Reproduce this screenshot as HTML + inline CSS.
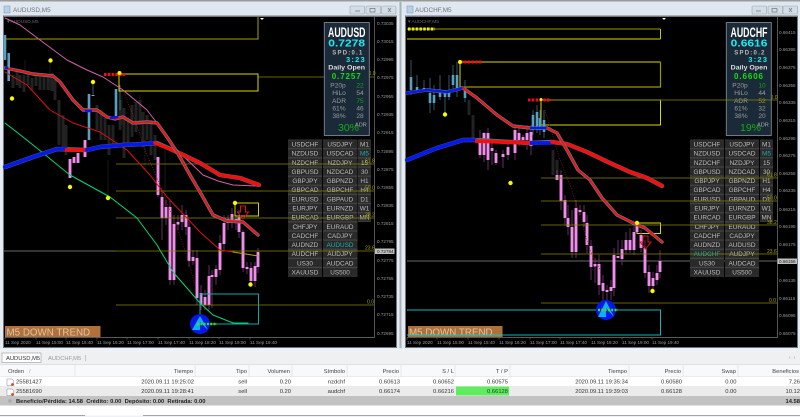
<!DOCTYPE html>
<html><head><meta charset="utf-8"><style>
html,body{margin:0;padding:0;background:#e4ecf2;width:800px;height:417px;overflow:hidden}
svg{display:block;filter:blur(.35px)}
text{font-family:"Liberation Sans",sans-serif}
.ax{font-size:4.6px;fill:#9a9a9a}
.bt{font-size:6.4px;fill:#bdbdbd;text-anchor:middle}
.fl{font-size:5px;fill:#a8a800}
.th{font-size:5.8px;fill:#444;text-anchor:end}
.td{font-size:5.8px;fill:#333;text-anchor:end}
.pl{font-size:6.6px;fill:#9a9a9a;text-anchor:middle}
.c{fill:none;stroke-linejoin:round;stroke-linecap:round}
</style></head><body>
<svg width="800" height="417" viewBox="0 0 800 417" xmlns="http://www.w3.org/2000/svg">
<defs>
<pattern id="b" width="800" height="9.14" y="139.6" patternUnits="userSpaceOnUse"><rect width="800" height="9.14" fill="#444"/><rect y=".6" width="800" height="7.9" fill="#2a2a2a"/></pattern>
</defs>
<rect width="800" height="417" fill="#e4ecf2"/>
<rect width="800" height="1.5" fill="#9a9a9a"/>
<rect x="0" y="2" width="800" height="14" fill="#dfe8f0"/>
<rect x="399.500" y="2" width="2" height="346" fill="#a9b0b6"/>
<rect x="3" y="15.500" width="394" height="332.500" fill="#70767c"/>
<rect x="405" y="15.500" width="393" height="332.500" fill="#70767c"/>
<rect x="4" y="17" width="392" height="330" fill="#000"/>
<rect x="406" y="17" width="391" height="330" fill="#000"/>
<!-- titles -->
<rect x="4" y="6" width="6" height="7" fill="#b8d0e4" stroke="#7fa0c0" stroke-width=".6"/>
<text x="13" y="12" font-size="6.400" fill="#6f7378">AUDUSD,M5</text>
<rect x="407" y="6" width="6" height="7" fill="#b8d0e4" stroke="#7fa0c0" stroke-width=".6"/>
<text x="415" y="12" font-size="6.400" fill="#6f7378">AUDCHF,M5</text>
<g fill="#d3dde6" stroke="#9aa6b0" stroke-width=".6">
<rect x="350" y="6" width="14.500" height="8" rx="1"/><rect x="366" y="6" width="14.500" height="8" rx="1"/><rect x="381.500" y="6" width="14.500" height="8" rx="1"/>
<rect x="752" y="6" width="14.500" height="8" rx="1"/><rect x="768" y="6" width="14.500" height="8" rx="1"/><rect x="783" y="6" width="14.500" height="8" rx="1"/>
</g>
<path d="M355 11h5M756 11h5" stroke="#777" stroke-width=".8"/>
<path d="M370 8.500h5v3.500h-5zM772 8.500h5v3.500h-5zM388 8l3 4M391 8l-3 4M789 8l3 4M792 8l-3 4" stroke="#777" stroke-width=".7" fill="none"/>
<text x="7" y="23" font-size="4.800" fill="#666">▾ AUDUSD,M5</text>
<text x="408" y="23" font-size="4.800" fill="#666">▾ AUDCHF,M5</text>
<path d="M260 18h4l-2 2zM662 18h4l-2 2z" fill="#fff"/>
<!-- axes -->
<path d="M374.500 17V337.500H5M777.500 17V337.500H407" fill="none" stroke="#777" stroke-width=".7"/>
<path d="M5 337.500v2M36 337.500v2M66 337.500v2M97 337.500v2M127 337.500v2M158 337.500v2M189 337.500v2M219 337.500v2M250 337.500v2M407 337.500v2M437 337.500v2M468 337.500v2M499 337.500v2M530 337.500v2M560 337.500v2M591 337.500v2M622 337.500v2M652 337.500v2" stroke="#777" stroke-width=".6"/>
<g class="ax">
<text x="377" y="25">0.73035</text><text x="377" y="43">0.73015</text><text x="377" y="61">0.72995</text><text x="377" y="79">0.72975</text><text x="377" y="98">0.72955</text><text x="377" y="116">0.72935</text><text x="377" y="134">0.72915</text><text x="377" y="153">0.72895</text><text x="377" y="171">0.72875</text><text x="377" y="189">0.72855</text><text x="377" y="207">0.72835</text><text x="377" y="225">0.72815</text><text x="377" y="243">0.72795</text><text x="377" y="262">0.72775</text><text x="377" y="280">0.72755</text><text x="377" y="298">0.72735</text><text x="377" y="316">0.72715</text><text x="377" y="335">0.72695</text>
<text x="779" y="34">0.66415</text><text x="779" y="51">0.66395</text><text x="779" y="69">0.66375</text><text x="779" y="87">0.66355</text><text x="779" y="104">0.66335</text><text x="779" y="122">0.66315</text><text x="779" y="140">0.66295</text><text x="779" y="157">0.66275</text><text x="779" y="175">0.66255</text><text x="779" y="192">0.66235</text><text x="779" y="211">0.66215</text><text x="779" y="228">0.66195</text><text x="779" y="246">0.66175</text><text x="779" y="282">0.66135</text><text x="779" y="300">0.66115</text><text x="779" y="317">0.66095</text><text x="779" y="335">0.66075</text>
<text x="5" y="344">11 Sep 2020</text><text x="36" y="344">11 Sep 15:00</text><text x="66" y="344">11 Sep 15:40</text><text x="97" y="344">11 Sep 16:20</text><text x="127" y="344">11 Sep 17:00</text><text x="158" y="344">11 Sep 17:40</text><text x="189" y="344">11 Sep 18:20</text><text x="219" y="344">11 Sep 19:00</text><text x="250" y="344">11 Sep 19:40</text>
<text x="407" y="344">11 Sep 2020</text><text x="437" y="344">11 Sep 15:00</text><text x="468" y="344">11 Sep 15:40</text><text x="499" y="344">11 Sep 16:20</text><text x="530" y="344">11 Sep 17:00</text><text x="560" y="344">11 Sep 17:40</text><text x="591" y="344">11 Sep 18:20</text><text x="622" y="344">11 Sep 19:00</text><text x="652" y="344">11 Sep 19:40</text>
</g>
<rect x="375" y="248.500" width="19.500" height="5.500" fill="#c0c0c0"/><text x="377" y="253" font-size="4.600" fill="#222">0.72784</text>
<rect x="777.500" y="258.500" width="19.500" height="5.500" fill="#c0c0c0"/><text x="779" y="263" font-size="4.600" fill="#222">0.66156</text>
<!-- base lines -->
<path d="M4 251H116" stroke="#8a8a8a" stroke-width=".8"/><path d="M407 261H777" stroke="#8a8a8a" stroke-width=".8"/>
<!-- boxes left -->
<path d="M5 39H258V17" fill="none" stroke="#a8a400" stroke-width="1"/>
<path d="M258 77H374" stroke="#8a8600" stroke-width=".8"/>
<!-- dark candles left -->
<path d="M13 75v13M17 72v13M20 75v13M24 75v17M28 72v13M32 78v12M36 74v12M40 74v16M44 76v14M48 74v16M52 73v18M55 80v20M59 100v45M63 115v35M66 125v30M97 105v25M101 110v30M105 118v22M109 125v30M113 125v20M120 100v30M124 108v50M128 120v25M132 105v32M136 102v30M140 100v25M143 112v35M147 115v25M151 120v35M155 135v25" stroke="#222" stroke-width="3"/>
<path d="M25 60v25M50 60v30M93 84v12M119 80v20M122 95v30M140 95v40M165 145v60M108 160v40M145 140v30" stroke="#1e1e1e" stroke-width=".8"/>
<!-- blue candles left -->
<path d="M5 35v25M8.700 53v28M89 94v46M116 89v28" stroke="#5aa0c0" stroke-width="2.600"/>
<path d="M93 84v10M120 85v25" stroke="#466a80" stroke-width=".8"/>
<rect x="91.500" y="95" width="3" height="1" fill="#8ab"/>
<!-- pink wicks left -->
<path d="M158 157v40M162 190v50M166 200v25M170 200v85M174 215v70M178 215v15M182 205v25M186 210v25M189 222v45M193 250v15M197 250v55M201 285v25M205 290v20M209 265v45M212 270v38M216 265v20M220 235v40M224 215v35M228 215v15M232 208v20M236 215v15M239 210v28M243 230v42M247 262v12M251 262v25M255 262v25M258 248v25" stroke="#7a3d7a" stroke-width=".8"/>
<!-- pink candles left -->
<path d="M70 159v19M74 157v6M78 153v10M85 140v17M158 157v38M162 197v21M166 207v11M170 207v73M174 224v56M178 222v2.500M182 215v7M186 215v12M189 227v34M193 257v4M197 258v40M201 293v12M205 297v8M209 276v29M212 275v2M216 269v8M220 243v27M224 223v21M228 219v4M232 214v9M236 219v4M239 217v15M243 232v36M247 267v2M251 268v13M255 266v15M258 252v15" stroke="#f08cea" stroke-width="2.900"/>
<!-- right boxes -->
<path d="M407 29H660.500" stroke="#9c9800" stroke-width="1"/>
<path d="M407 39H660.500" stroke="#d8d800" stroke-width="1"/>
<path d="M660.500 29V39" stroke="#c8c800" stroke-width="1"/>
<path d="M460 87V62H660.500" fill="none" stroke="#d8d800" stroke-width="1"/>
<path d="M460 87H660.500V62" fill="none" stroke="#9c9800" stroke-width="1.200"/>
<path d="M541 100H660.500V125H541Z" fill="none" stroke="#d8d800" stroke-width="1"/>
<path d="M637 223H660.500V233.500H637Z" fill="none" stroke="#d8d800" stroke-width="1"/>
<path d="M407 310H660.500V335H407" fill="none" stroke="#12b8b8" stroke-width="1"/>
<!-- right candles -->
<path d="M469 100v15M473 115v26M553 150v25M557 160v15" stroke="#222" stroke-width="3"/>
<path d="M411 60v35M417 75v18M424 80v12M430 78v35M434 85v25M440 75v25M445 92v22M449 75v25M453 65v25M457 62v35M465 80v22M533 110v25M537 105v28M540 110v25M544 110v28" stroke="#466a80" stroke-width=".8"/>
<path d="M411 77v13M417 87v5M424 88v2M430 93v10M434 95v8M440 90v7M445 92v5M449 93v4M453 75v10M457 75v15M465 88v10M533 115v15M537 112v18M540 118v12M544 120v12" stroke="#5aa0c0" stroke-width="2.600"/>
<path d="M480 130v28M484 132v30M488 128v42M492 140v25M496 150v15M503 150v18M508 140v20M515 125v35M519 128v18M523 135v10M527 125v25M531 125v30M557 170v10M561 170v40M565 195v30M568 205v30M572 210v48M576 200v58M580 205v10M584 205v22M587 215v38M591 240v40M595 258v25M599 255v40M603 275v30M607 285v20M611 280v20M614 248v48M618 240v15M622 240v25M626 232v22M630 228v25M634 225v30M641 230v22M645 240v38M649 265v28M653 272v18M657 265v20M660 250v28" stroke="#7a3d7a" stroke-width=".8"/>
<path d="M480 138v17M484 133v22M488 133v27M492 148v3M496 153v10M503 154v3M508 147v8M515 130v23M519 133v7M523 137v3M527 133v7M531 132v14M557 175v5M561 175v26M565 200v18M568 218v9M572 227v25M576 208v44M580 210v2M584 212v10M587 223v22M591 246v21M595 264v2.500M599 264v21M603 283v8M607 290v2M611 287v4M614 255v33M618 256v2M622 249v10M626 240v10M630 240v10M634 232v18M637 225v7M641 235v13M645 248v25M649 272v14M653 278v8M657 273v7M660 261v11" stroke="#f08cea" stroke-width="2.900"/>
<!-- red dotted -->
<path d="M123 90L135 120 145 150 160 185 172 215 185 250 195 285" fill="none" stroke="#a01818" stroke-width=".7" stroke-dasharray="1 1.500"/>
<path d="M545 110L560 160 572 190 590 250 600 270" fill="none" stroke="#a01818" stroke-width=".7" stroke-dasharray="1 1.500"/>
<!-- buttons left -->
<rect x="288" y="139.600" width="34" height="137.100" fill="url(#b)"/>
<rect x="323" y="139.600" width="34.500" height="137.100" fill="url(#b)"/>
<rect x="358" y="139.600" width="13" height="82.300" fill="url(#b)"/>
<g class="bt">
<text x="305" y="146.500">USDCHF</text><text x="305" y="155.600">NZDUSD</text><text x="305" y="164.800">NZDCHF</text><text x="305" y="173.900">GBPUSD</text><text x="305" y="183">GBPJPY</text><text x="305" y="192.200">GBPCAD</text><text x="305" y="201.300">EURUSD</text><text x="305" y="210.500">EURJPY</text><text x="305" y="219.600">EURCAD</text><text x="305" y="228.800">CHFJPY</text><text x="305" y="237.900">CADCHF</text><text x="305" y="247">AUDNZD</text><text x="305" y="256.200">AUDCHF</text><text x="305" y="265.300">US30</text><text x="305" y="274.500">XAUUSD</text>
<text x="340" y="146.500">USDJPY</text><text x="340" y="155.600">USDCAD</text><text x="340" y="164.800">NZDJPY</text><text x="340" y="173.900">NZDCAD</text><text x="340" y="183">GBPNZD</text><text x="340" y="192.200">GBPCHF</text><text x="340" y="201.300">GBPAUD</text><text x="340" y="210.500">EURNZD</text><text x="340" y="219.600">EURGBP</text><text x="340" y="228.800">EURAUD</text><text x="340" y="237.900">CADJPY</text><text x="340" y="247" style="fill:#18b0b0">AUDUSD</text><text x="340" y="256.200">AUDJPY</text><text x="340" y="265.300">AUDCAD</text><text x="340" y="274.500">US500</text>
<text x="364.500" y="146.500">M1</text><text x="364.500" y="155.600" style="fill:#18b0b0">M5</text><text x="364.500" y="164.800">15</text><text x="364.500" y="173.900">30</text><text x="364.500" y="183">H1</text><text x="364.500" y="192.200">H4</text><text x="364.500" y="201.300">D1</text><text x="364.500" y="210.500">W1</text><text x="364.500" y="219.600">MN</text>
</g>
<!-- buttons right -->
<rect x="690" y="139.600" width="34" height="137.100" fill="url(#b)"/>
<rect x="725" y="139.600" width="34" height="137.100" fill="url(#b)"/>
<rect x="760" y="139.600" width="13" height="82.300" fill="url(#b)"/>
<g class="bt">
<text x="707" y="146.500">USDCHF</text><text x="707" y="155.600">NZDUSD</text><text x="707" y="164.800">NZDCHF</text><text x="707" y="173.900">GBPUSD</text><text x="707" y="183">GBPJPY</text><text x="707" y="192.200">GBPCAD</text><text x="707" y="201.300">EURUSD</text><text x="707" y="210.500">EURJPY</text><text x="707" y="219.600">EURCAD</text><text x="707" y="228.800">CHFJPY</text><text x="707" y="237.900">CADCHF</text><text x="707" y="247">AUDNZD</text><text x="707" y="256.200" style="fill:#18b0b0">AUDCHF</text><text x="707" y="265.300">US30</text><text x="707" y="274.500">XAUUSD</text>
<text x="742" y="146.500">USDJPY</text><text x="742" y="155.600">USDCAD</text><text x="742" y="164.800">NZDJPY</text><text x="742" y="173.900">NZDCAD</text><text x="742" y="183">GBPNZD</text><text x="742" y="192.200">GBPCHF</text><text x="742" y="201.300">GBPAUD</text><text x="742" y="210.500">EURNZD</text><text x="742" y="219.600">EURGBP</text><text x="742" y="228.800">EURAUD</text><text x="742" y="237.900">CADJPY</text><text x="742" y="247">AUDUSD</text><text x="742" y="256.200">AUDJPY</text><text x="742" y="265.300">AUDCAD</text><text x="742" y="274.500">US500</text>
<text x="766.500" y="146.500">M1</text><text x="766.500" y="155.600" style="fill:#18b0b0">M5</text><text x="766.500" y="164.800">15</text><text x="766.500" y="173.900">30</text><text x="766.500" y="183">H1</text><text x="766.500" y="192.200">H4</text><text x="766.500" y="201.300">D1</text><text x="766.500" y="210.500">W1</text><text x="766.500" y="219.600">MN</text>
</g>
<!-- fib lines -->
<path d="M116 164H374M116 191H374M116 218H374M116 251H374M116 305H374" stroke="#8a8600" stroke-width=".8"/>
<path d="M541 100H777M541 178H777M541 201H777M541 225H777M541 254H777M541 303H777" stroke="#8a8600" stroke-width=".8"/>
<g class="fl">
<text x="363" y="75">100.0</text><text x="365" y="162.500">61.8</text><text x="365" y="189.500">50.0</text><text x="365" y="216.500">38.2</text><text x="365" y="249.500">23.6</text><text x="367" y="303.500">0.0</text>
<text x="765" y="99">100.0</text><text x="767" y="176.500">61.8</text><text x="767" y="199.500">50.0</text><text x="767" y="224">38.2</text><text x="767" y="253">23.6</text><text x="769" y="302">0.0</text>
</g>
<!-- left shapes -->
<path d="M119 91V74H258V91Z" fill="none" stroke="#d8d800" stroke-width="1"/>
<path d="M235 203H258.500V216H235Z" fill="none" stroke="#d0d000" stroke-width="1"/>
<path d="M200 324V294H258.500V324Z" fill="none" stroke="#12a8a8" stroke-width="1"/>
<!-- MA curves left -->
<path class="c" d="M5 18L20 25 40 40 67 60 87 70 103 77 123 90 147 110 160 127 177 150 203 175 218 181 233 185 258 186" stroke="#d060a8" stroke-width="1"/>
<path class="c" d="M5 72L27 85 50 110 73 123 100 132 127 150 150 175 167 197 187 218 200 232 220 250 233 252" stroke="#e01010" stroke-width="1"/>
<path class="c" d="M233 252L258 256" stroke="#c8a020" stroke-width="1"/>
<path class="c" d="M5 123L23 137 43 153 60 167 70 175 110 197 137 218 157 245 173 272 200 303 213 315 233 323 248 323" stroke="#00d878" stroke-width="1"/>
<path class="c" d="M5 167L33 157 57 149 87 150 100 147 123 145 143 144 157 143 177 152 200 163 220 175 240 178 259 185" stroke="#667" stroke-width="4.400"/>
<path class="c" d="M5 167L33 157 57 149 66 149" stroke="#0418f0" stroke-width="3.800"/>
<path d="M65 150H87" stroke="#f01010" stroke-width="3.800"/>
<path class="c" d="M87 150L100 147 123 145 143 144 155 143" stroke="#0418f0" stroke-width="3.800"/>
<path class="c" d="M155 143L177 152 200 163 220 175 240 178 259 185" stroke="#f01010" stroke-width="3.600"/>
<path class="c" d="M5 68L20 71 33 74 53 76 60 82 73 100 83 110 97 110 107 117 115 119 123 117 133 123 147 122 157 123 167 137 177 152 190 175 200 192 213 215 227 221 243 222 258 235" stroke="#6a7a8a" stroke-width="3.400"/>
<path class="c" d="M5 68L20 71 33 74 53 76 60 82 73 100 83 110 97 110 107 117 115 119 123 117 133 123 147 122 157 123 167 137 177 152 190 175 200 192 213 215 227 221 243 222 258 235" stroke="#f01010" stroke-width="2"/>
<path d="M85 111H92M110 118L118 117M5 68H8" stroke="#0418f0" stroke-width="2.400"/>
<!-- MA curves right -->
<path class="c" d="M407 160L437 148 463 140 475 140 530 143 552 142 567 144 587 152 610 163 630 172 647 178 662 186" stroke="#667" stroke-width="4.400"/>
<path class="c" d="M407 160L437 148 463 140 475 140" stroke="#0418f0" stroke-width="3.800"/>
<path d="M475 141L530 143" stroke="#f01010" stroke-width="3.800"/>
<path d="M530 143H553" stroke="#0418f0" stroke-width="3.800"/>
<path class="c" d="M552 142L567 144 587 152 610 163 630 172 647 178 662 186" stroke="#f01010" stroke-width="3.600"/>
<path class="c" d="M407 93L427 90 447 92 463 88 477 98 497 115 513 126 530 128 547 128 557 133 567 150 580 175 590 175 602 198 617 215 633 223 645 228 662 242" stroke="none"/>
<path class="c" d="M407 93L427 90 447 92 463 88 477 98 497 115 513 126 530 128 547 128 557 133 567 150 578 170 590 180 602 198 617 215 633 223 645 228 662 242" stroke="#6a7a8a" stroke-width="3.400"/>
<path class="c" d="M407 93L427 90 447 92 463 88" stroke="#0418f0" stroke-width="2.600"/>
<path class="c" d="M463 88L477 98 497 115 513 126 530 128" stroke="#f01010" stroke-width="2"/>
<path d="M530 128H547" stroke="#0418f0" stroke-width="2.600"/>
<path class="c" d="M547 128L557 133 567 150 578 170 590 180 602 198 617 215 633 223 645 228 662 242" stroke="#f01010" stroke-width="2"/>
<!-- arrows -->
<path d="M240.500 206h5v6h3l-5.500 7-5.500-7h3z" fill="none" stroke="#e01010" stroke-width="1"/>
<path d="M643 236h5v6h3l-5.500 7-5.500-7h3z" fill="none" stroke="#e01010" stroke-width="1"/>
<!-- red diamonds -->
<path d="M104 74.500h21M460 62h22M528 100h23" stroke="#f01010" stroke-width="3" stroke-dasharray="2.600 1.200"/>
<path d="M408 29h27" stroke="#f0f000" stroke-width="3" stroke-dasharray="2.600 1.200"/>
<!-- circles -->
<circle cx="200" cy="324" r="10" fill="#0418e8"/>
<path d="M200 316L192 330H200V322L208 330Z" fill="#10b0f0"/>
<circle cx="606" cy="310" r="10" fill="#0418e8"/>
<path d="M606 301L598 317H606V308L614 317Z" fill="#10b0f0"/>
<path d="M197 324h20M598 310h20" stroke="#40e020" stroke-width="2.600" stroke-dasharray="2 1.300"/>
<!-- yellow dots -->
<g fill="#f8f800">
<circle cx="50.500" cy="60.500" r="2.200"/><circle cx="12" cy="98.500" r="2.200"/><circle cx="93" cy="82" r="2.200"/><circle cx="119.500" cy="73" r="2"/><circle cx="70" cy="187" r="2.200"/><circle cx="108" cy="198" r="2.200"/><circle cx="235" cy="203" r="2.200"/><circle cx="250.500" cy="284.500" r="2.200"/>
<circle cx="460" cy="62" r="2"/><circle cx="445" cy="114.500" r="2.200"/><circle cx="510.500" cy="183" r="2.200"/><circle cx="637" cy="223" r="2.200"/><circle cx="652.500" cy="291" r="2.200"/><circle cx="541" cy="99.500" r="1.500"/>
</g>
<!-- M5 labels -->
<rect x="5" y="326" width="95.500" height="11" fill="#b0703a"/>
<text x="6.500" y="335.500" font-size="9.800" fill="#dcc4a8">M5 DOWN TREND</text>
<rect x="408" y="326" width="94.500" height="11" fill="#b0703a"/>
<text x="409" y="335.500" font-size="9.800" fill="#dcc4a8">M5 DOWN TREND</text>
<path d="M407 335H502" stroke="#12c8c8" stroke-width="1"/>
<!-- info panels -->
<rect x="324.300" y="22.500" width="45" height="113" fill="#1b2a38" stroke="#7a8590" stroke-width=".9"/>
<text x="328" y="36.800" font-size="13.500" font-weight="bold" fill="#fff" textLength="37.500" lengthAdjust="spacingAndGlyphs">AUDUSD</text>
<text x="328.300" y="46.500" font-size="10" font-weight="bold" fill="#22e8f0" textLength="36.700" lengthAdjust="spacingAndGlyphs">0.7278</text>
<text x="332.300" y="54.500" font-size="6" font-weight="bold" fill="#bbb" textLength="30" lengthAdjust="spacing">SPD:0.1</text>
<text x="346" y="62" font-size="7.500" font-weight="bold" fill="#22e8f0" textLength="18.700">3:23</text>
<text x="328.300" y="69.500" font-size="6.200" font-weight="bold" fill="#ddd" textLength="36.700" lengthAdjust="spacingAndGlyphs">Daily Open</text>
<text x="331.700" y="79" font-size="8" font-weight="bold" fill="#10e010" textLength="29">0.7257</text>
<g class="pl"><text x="338" y="87.500">P20p</text><text x="339" y="95">HiLo</text><text x="339" y="103">ADR</text><text x="339" y="110.500">61%</text><text x="339" y="118">38%</text></g>
<g class="pl"><text x="360" y="87.500" style="fill:#14a014">22</text><text x="360" y="95">54</text><text x="360" y="103" style="fill:#14a014">75</text><text x="360" y="110.500">46</text><text x="360" y="118">28</text></g>
<text x="338" y="131" font-size="10.500" fill="#10b010">30%</text>
<text x="355" y="126.500" font-size="5.600" fill="#aaa">ADR</text>

<rect x="726.300" y="22.500" width="45" height="113" fill="#1b2a38" stroke="#7a8590" stroke-width=".9"/>
<text x="730.500" y="36.800" font-size="13.500" font-weight="bold" fill="#fff" textLength="37" lengthAdjust="spacingAndGlyphs">AUDCHF</text>
<text x="730.700" y="46.500" font-size="10" font-weight="bold" fill="#22e8f0" textLength="36.700" lengthAdjust="spacingAndGlyphs">0.6616</text>
<text x="734.300" y="54.500" font-size="6" font-weight="bold" fill="#bbb" textLength="30" lengthAdjust="spacing">SPD:0.2</text>
<text x="748.300" y="62" font-size="7.500" font-weight="bold" fill="#22e8f0" textLength="18.700">3:23</text>
<text x="730.700" y="69.500" font-size="6.200" font-weight="bold" fill="#ddd" textLength="36.700" lengthAdjust="spacingAndGlyphs">Daily Open</text>
<text x="734" y="79" font-size="8" font-weight="bold" fill="#10e010" textLength="29">0.6606</text>
<g class="pl"><text x="740" y="87.500">P20p</text><text x="741" y="95">HiLo</text><text x="741" y="103">ADR</text><text x="741" y="110.500">61%</text><text x="741" y="118">38%</text></g>
<g class="pl"><text x="762" y="87.500" style="fill:#14a014">10</text><text x="762" y="95">44</text><text x="762" y="103" style="fill:#b08a10">52</text><text x="762" y="110.500">32</text><text x="762" y="118">20</text></g>
<text x="740" y="131" font-size="10.500" fill="#10b010">19%</text>
<text x="757" y="126.500" font-size="5.600" fill="#aaa">ADR</text>
<path d="M726 100H772" stroke="#8a8600" stroke-width=".8"/>
<!-- bottom terminal -->
<rect x="0" y="349" width="800" height="68" fill="#eef2f5"/>
<rect x="0" y="352" width="800" height="11" fill="#eef0f2"/>
<rect x="2" y="353" width="39" height="9.500" fill="#fff" stroke="#999" stroke-width=".6"/>
<text x="6" y="360" font-size="5.800" fill="#333">AUDUSD,M5</text>
<text x="48" y="360" font-size="5.800" fill="#999">AUDCHF,M5</text>
<path d="M85.500 355v6" stroke="#aaa" stroke-width=".6"/>
<text x="789" y="359" font-size="5" fill="#999">‹ &#160;›</text>
<rect x="0" y="364" width="800" height="13" fill="#f8f9fa"/>
<path d="M0 364.500H800M0 377H800" stroke="#d8d8d8" stroke-width=".7"/>
<path d="M75 365v12M195 365v12M249 365v12M292 365v12M347 365v12M401 365v12M455 365v12M510 365v12M629 365v12M683 365v12M738 365v12" stroke="#e2e2e2" stroke-width=".7"/>
<rect x="0" y="377" width="800" height="9" fill="#fff"/>
<rect x="0" y="386" width="800" height="10" fill="#ebebeb"/>
<rect x="456" y="386.500" width="53" height="9" fill="#5fec5f"/>
<rect x="0" y="396" width="800" height="9.500" fill="#c2c2c2"/>
<rect x="0" y="405.500" width="800" height="10" fill="#fff"/>
<path d="M0 415.500H85M143 415.500H800" stroke="#888" stroke-width=".8"/>
<text x="8" y="373" font-size="5.800" fill="#444">Orden</text><text x="29" y="373" font-size="5.800" fill="#aaa">/</text>
<g class="th"><text x="193" y="373">Tiempo</text><text x="247" y="373">Tipo</text><text x="290" y="373">Volumen</text><text x="345" y="373">Símbolo</text><text x="399" y="373">Precio</text><text x="454" y="373">S / L</text><text x="508" y="373">T / P</text><text x="627" y="373">Tiempo</text><text x="681" y="373">Precio</text><text x="736" y="373">Swap</text><text x="799" y="373">Beneficios</text></g>
<path d="M7 379h5l1.500 1.500v5h-6.500z" fill="#fff" stroke="#889" stroke-width=".5"/><circle cx="12.500" cy="384.500" r="1.400" fill="#e04020"/>
<path d="M7 389h5l1.500 1.500v5h-6.500z" fill="#fff" stroke="#889" stroke-width=".5"/><circle cx="12.500" cy="394.500" r="1.400" fill="#e04020"/>
<text x="16" y="383.500" font-size="5.800" fill="#333">25581427</text>
<text x="16" y="393" font-size="5.800" fill="#333">25581690</text>
<g class="td">
<text x="194" y="383.500">2020.09.11 19:25:02</text><text x="247" y="383.500">sell</text><text x="291" y="383.500">0.20</text><text x="345" y="383.500">nzdchf</text><text x="400" y="383.500">0.60613</text><text x="454" y="383.500">0.60652</text><text x="508" y="383.500">0.60575</text><text x="628" y="383.500">2020.09.11 19:35:34</text><text x="682" y="383.500">0.60580</text><text x="736.500" y="383.500">0.00</text><text x="800" y="383.500">7.26</text>
<text x="194" y="393">2020.09.11 19:28:41</text><text x="247" y="393">sell</text><text x="291" y="393">0.20</text><text x="345" y="393">audchf</text><text x="400" y="393">0.66174</text><text x="454" y="393">0.66216</text><text x="508" y="393">0.66128</text><text x="628" y="393">2020.09.11 19:39:03</text><text x="682" y="393">0.66128</text><text x="736.500" y="393">0.00</text><text x="800" y="393">10.12</text>
</g>
<circle cx="10" cy="401" r="1.800" fill="#aaa"/>
<text x="16" y="403" font-size="5.800" font-weight="bold" fill="#222">Beneficio/Pérdida: 14.58 &#160;Crédito: 0.00 &#160;Depósito: 0.00 &#160;Retirada: 0.00</text>
<text x="800" y="403" font-size="5.800" font-weight="bold" fill="#222" text-anchor="end">14.58</text>
</svg>
</body></html>
